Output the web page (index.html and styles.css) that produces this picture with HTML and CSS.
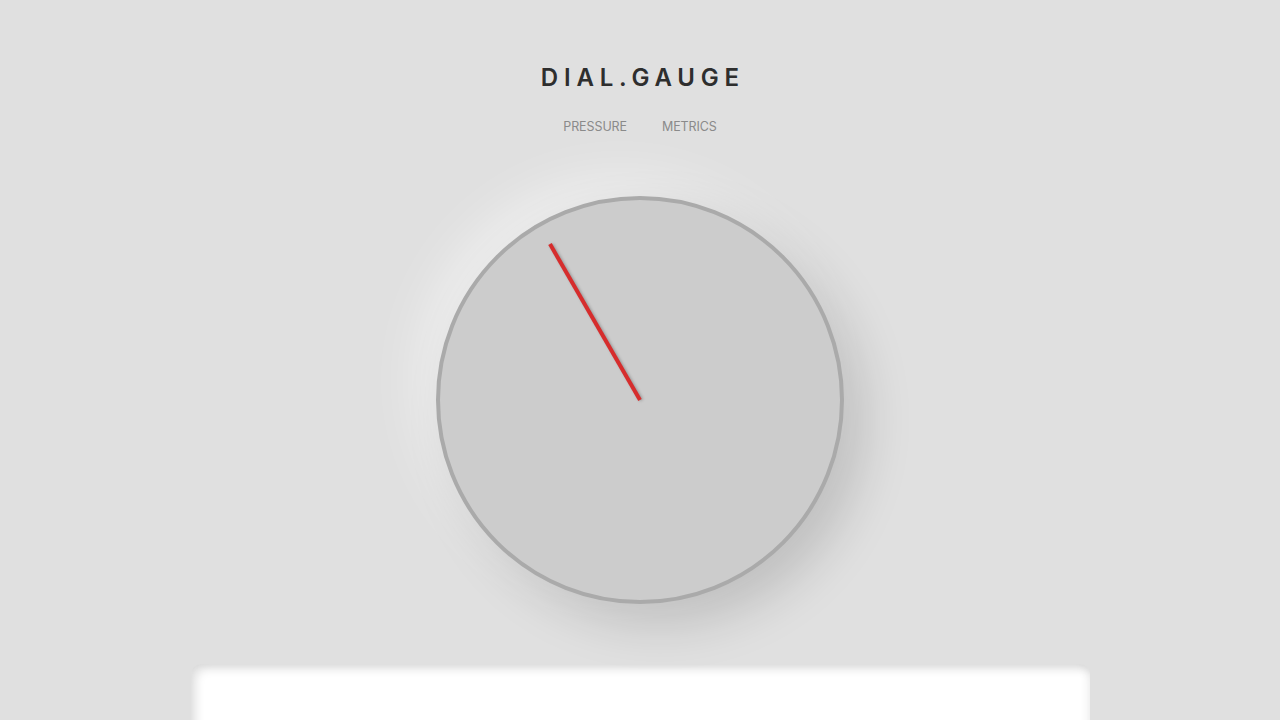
FILE: index.html
```html
<!DOCTYPE html>
<html lang="en">
<head>
<meta charset="utf-8">
<title>DIAL.GAUGE</title>
<link rel="stylesheet" href="styles.css">
</head>
<body>
  <header class="header">
    <h1 class="title">DIAL.GAUGE</h1>
    <nav class="nav">
      <a class="nav-link" href="#">PRESSURE</a>
      <a class="nav-link" href="#">METRICS</a>
    </nav>
  </header>
  <main class="main">
    <div class="dial">
      <div class="needle"></div>
    </div>
    <section class="panel"></section>
  </main>
</body>
</html>
```
FILE: styles.css
```css
* { box-sizing: border-box; }
html, body { margin: 0; padding: 0; }
body {
  background: #e0e0e0;
  font-family: "Inter", "Noto Sans", sans-serif;
  color: #333;
  overflow: hidden;
  height: 720px;
}
.header {
  display: flex;
  flex-direction: column;
  align-items: center;
  padding-top: 63px;
}
.title {
  margin: 0;
  font-size: 24px;
  line-height: 30px;
  font-weight: 600;
  letter-spacing: 5.8px;
  padding-left: 5.8px;
  color: #2e2e2e;
}
.nav {
  display: flex;
  gap: 35px;
  margin-top: 25px;
  height: 18px;
  align-items: center;
}
.nav-link {
  font-size: 12.5px;
  line-height: 18px;
  color: #8a8a8a;
  text-decoration: none;
  font-weight: 400;
  letter-spacing: -0.1px;
}
.main {
  display: flex;
  flex-direction: column;
  align-items: center;
  padding-top: 60px;
}
.dial {
  position: relative;
  width: 408px;
  height: 408px;
  border-radius: 50%;
  background: #cccccc;
  border: 4px solid #aaaaaa;
  box-shadow: 20px 20px 50px rgba(0,0,0,0.15), -20px -20px 50px rgba(255,255,255,0.45);
}
.needle {
  position: absolute;
  left: 50%;
  bottom: 50%;
  width: 4px;
  height: 180px;
  margin-left: -2px;
  background: #d62d2d;
  transform-origin: 50% 100%;
  transform: rotate(-30deg);
  box-shadow: 1px 1px 3px rgba(0,0,0,0.25);
}
.panel {
  margin-top: 60px;
  width: 899px;
  height: 300px;
  background: #ffffff;
  border-radius: 10px;
  box-shadow: inset 5px 5px 10px rgba(0,0,0,0.12), inset -3px 0 8px rgba(0,0,0,0.06);
}
```
